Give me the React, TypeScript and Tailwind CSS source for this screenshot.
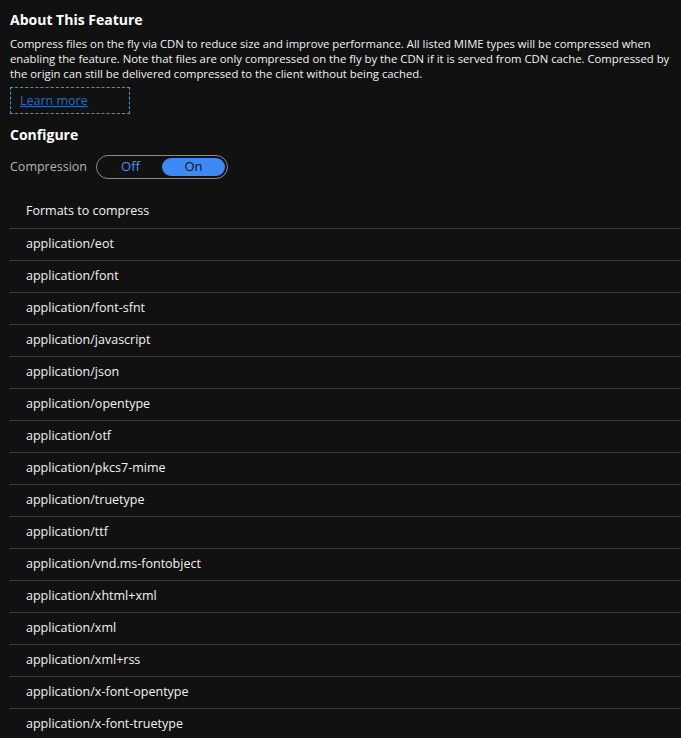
import React from 'react';

const formats = [
  'application/eot',
  'application/font',
  'application/font-sfnt',
  'application/javascript',
  'application/json',
  'application/opentype',
  'application/otf',
  'application/pkcs7-mime',
  'application/truetype',
  'application/ttf',
  'application/vnd.ms-fontobject',
  'application/xhtml+xml',
  'application/xml',
  'application/xml+rss',
  'application/x-font-opentype',
  'application/x-font-truetype',
];

function Toggle({ on, onChange }: { on: boolean; onChange: (v: boolean) => void }) {
  return (
    <div className="flex h-6 w-[132px] items-center rounded-full border border-[#8a8a8a] p-[2px]">
      <button
        className={`flex h-full flex-1 items-center justify-center rounded-full text-[13px] ${
          on ? 'text-[#4a95f5]' : 'bg-[#3d8af7] text-[#111]'
        }`}
        onClick={() => onChange(false)}
      >
        Off
      </button>
      <button
        className={`flex h-full flex-1 items-center justify-center rounded-full text-[13px] ${
          on ? 'bg-[#3d8af7] text-[#111]' : 'text-[#4a95f5]'
        }`}
        onClick={() => onChange(true)}
      >
        On
      </button>
    </div>
  );
}

export default function App() {
  const [enabled, setEnabled] = React.useState(true);

  return (
    <div
      className="h-[738px] overflow-hidden bg-[#111111] pl-[10px] text-white"
      style={{ fontFamily: '"Open Sans", "Noto Sans", sans-serif' }}
    >
      <h2 className="pt-[10px] text-[14px] font-bold leading-[20px]">About This Feature</h2>
      <p className="mt-[6px] whitespace-nowrap text-[11.3px] leading-[15px] text-[#f2f2f2]">
        Compress files on the fly via CDN to reduce size and improve performance. All listed MIME types will be compressed when
        <br />
        enabling the feature. Note that files are only compressed on the fly by the CDN if it is served from CDN cache. Compressed by
        <br />
        the origin can still be delivered compressed to the client without being cached.
      </p>
      <div className="mt-[6px] w-[120px] border border-dashed border-[#23a8d4] px-[9px] py-[3px] text-[12.5px] leading-[19px]">
        <a href="#" className="text-[#1f6ebf] underline">
          Learn more
        </a>
      </div>

      <h2 className="mt-[11px] text-[14px] font-bold leading-[20px]">Configure</h2>
      <div className="mt-[10px] flex items-center gap-[9px]">
        <span className="text-[12.5px] text-[#b3b3b3]">Compression</span>
        <Toggle on={enabled} onChange={setEnabled} />
      </div>

      <div className="mt-[16px]">
        <div className="flex h-[33px] items-center pl-4 text-[12.5px] text-[#f2f2f2]">Formats to compress</div>
        {formats.map(f => (
          <div
            key={f}
            className="flex h-[32px] items-center border-t border-[#3b3b3b] pl-4 text-[12.5px] text-[#f2f2f2]"
          >
            {f}
          </div>
        ))}
      </div>
    </div>
  );
}
